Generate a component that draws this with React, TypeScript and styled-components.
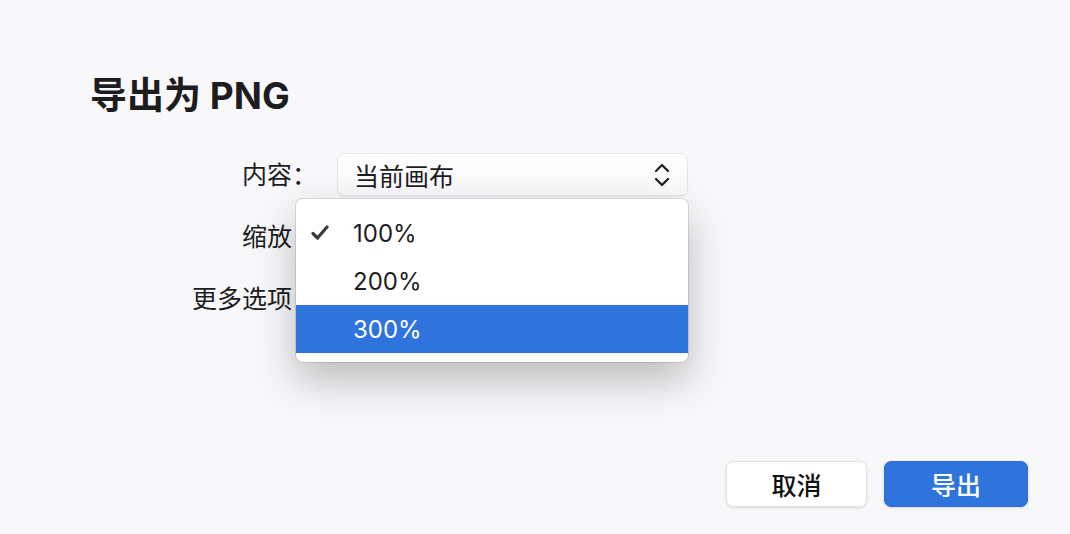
import styled, { createGlobalStyle } from 'styled-components';

const GlobalStyle = createGlobalStyle`
    html, body {
        margin: 0;
        padding: 0;
        background: #f8f8fa;
    }
    body {
        font-family: Inter, "Noto Sans CJK SC", sans-serif;
        color: #1d1d1f;
    }
`;

const Page = styled.div`
    width: 1070px;
    height: 534px;
    box-sizing: border-box;
    padding: 71px 42px 0 90px;
    display: flex;
    flex-direction: column;
`;

const Title = styled.h1`
    margin: 0;
    font-size: 37px;
    font-weight: 700;
    line-height: 50px;
    color: #1d1d1f;
`;

const Form = styled.div`
    margin-top: 32px;
    display: grid;
    grid-template-columns: 227px 351px;
    grid-auto-rows: 43px;
    column-gap: 20px;
    row-gap: 19px;
    align-items: center;
`;

const Label = styled.div`
    text-align: right;
    font-size: 25px;
    line-height: 30px;
    color: #1d1d1f;
    white-space: nowrap;
`;

const Field = styled.div`
    position: relative;
    height: 43px;
`;

const Select = styled.div`
    height: 43px;
    box-sizing: border-box;
    display: flex;
    align-items: center;
    justify-content: space-between;
    padding: 0 16px 0 16px;
    background: linear-gradient(#fdfdfe, #f9f9fb);
    border: 1px solid #e6e6ea;
    border-radius: 7px;
    box-shadow: 0 1px 2px rgba(0, 0, 0, 0.06);
    font-size: 25px;
    color: #1d1d1f;
`;

const Menu = styled.div`
    position: absolute;
    left: -41px;
    top: -16px;
    width: 392px;
    box-sizing: border-box;
    padding: 10px 0 9px;
    background: #ffffff;
    border-radius: 7px;
    box-shadow: 0 0 0 1px rgba(0, 0, 0, 0.1), 0 18px 42px rgba(0, 0, 0, 0.25);
    z-index: 2;
`;

const Item = styled.div<{ $active?: boolean }>`
    position: relative;
    height: 48px;
    display: flex;
    align-items: center;
    padding-left: 57px;
    font-size: 24px;
    background: ${(p) => (p.$active ? '#2f74dd' : 'transparent')};
    color: ${(p) => (p.$active ? '#ffffff' : '#1d1d1f')};
`;

const Check = styled.svg`
    position: absolute;
    left: 15px;
    top: 16px;
`;

const Footer = styled.div`
    margin-top: auto;
    margin-bottom: 27px;
    display: flex;
    justify-content: flex-end;
    gap: 17px;
`;

const Button = styled.button<{ $primary?: boolean }>`
    width: ${(p) => (p.$primary ? '144px' : '141px')};
    height: 46px;
    border-radius: 7px;
    font-family: inherit;
    font-size: 25px;
    font-weight: 500;
    cursor: pointer;
    border: 1px solid ${(p) => (p.$primary ? '#2a6fd8' : '#e4e4e8')};
    background: ${(p) => (p.$primary ? '#2f74dd' : '#ffffff')};
    color: ${(p) => (p.$primary ? '#ffffff' : '#111111')};
    box-shadow: 0 1px 3px rgba(0, 0, 0, 0.12);
`;

const Chevrons = () => (
    <svg width="18" height="26" viewBox="0 0 18 26" fill="none" stroke="#1d1d1f" strokeWidth="2.2" strokeLinecap="round" strokeLinejoin="round">
        <path d="M3 9 L9 3 L15 9" />
        <path d="M3 17 L9 23 L15 17" />
    </svg>
);

export default function App() {
    return (
        <Page>
            <GlobalStyle />
            <Title>导出为 PNG</Title>
            <Form>
                <Label>内容：</Label>
                <Field>
                    <Select>
                        当前画布
                        <Chevrons />
                    </Select>
                </Field>
                <Label>缩放：</Label>
                <Field>
                    <Menu>
                        <Item>
                            <Check width="18" height="16" viewBox="0 0 18 16" fill="none" stroke="#3a3a3c" strokeWidth="3.2" strokeLinecap="round" strokeLinejoin="round">
                                <path d="M2 8.5 L6.5 13 L16 2" />
                            </Check>
                            100%
                        </Item>
                        <Item>200%</Item>
                        <Item $active>300%</Item>
                    </Menu>
                </Field>
                <Label>更多选项：</Label>
                <Field />
            </Form>
            <Footer>
                <Button>取消</Button>
                <Button $primary>导出</Button>
            </Footer>
        </Page>
    );
}
